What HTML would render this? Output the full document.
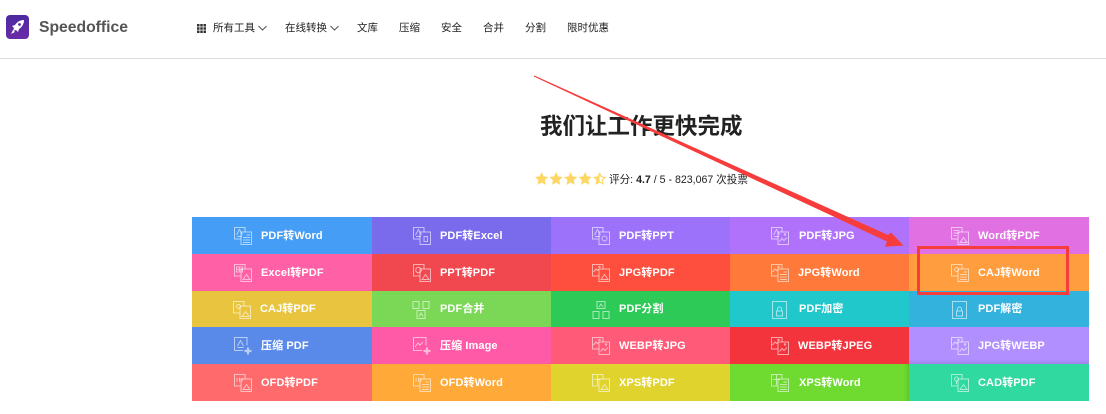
<!DOCTYPE html>
<html lang="zh"><head><meta charset="utf-8"><title>Speedoffice</title>
<style>
html,body{margin:0;padding:0;background:#fff}
body{width:1106px;height:414px;position:relative;overflow:hidden;font-family:"Liberation Sans","Noto Sans CJK SC",sans-serif}
.a{position:absolute;white-space:nowrap}
.n{top:21px;font-size:10.5px;line-height:15px;color:#222}
.c{position:absolute}
.c span{position:absolute;top:1px;line-height:36px;font-size:11px;font-weight:700;color:#fff;white-space:nowrap;letter-spacing:.1px}
.c.r3 span{top:0}
.c svg{position:absolute;top:10px;width:18px;height:18px;fill:none;stroke:#fff;stroke-opacity:.58;stroke-width:1}
</style></head><body>
<svg class="a" style="left:0;top:0" width="0" height="0">
<defs>
<linearGradient id="g" x1="0" y1="0" x2="0" y2="1"><stop offset="0" stop-color="#4b2aa0"/><stop offset="1" stop-color="#6a2aa8"/></linearGradient>
<symbol id="dd" viewBox="0 0 18 18"><path d="M6.500 12H.5V.5H11V5"/><path d="M7 5h10.500V17.500H7z"/></symbol>
<symbol id="A" viewBox="0 0 18 18"><path d="M2.500 8l3-5.500L8.500 8M3 9.500h5"/></symbol>
<symbol id="L" viewBox="0 0 18 18"><path d="M12.500 8h3.500M9 10.500h7M9 13h7M9 15.500h7"/></symbol>
<symbol id="B" viewBox="0 0 18 18"><path d="M9 15.500l3.500-5 3.500 5zM9 15.500h7"/></symbol>
<symbol id="P" viewBox="0 0 18 18"><path d="M1.500 8l2.500-3 1.500 1.500L7 5"/><circle cx="7.500" cy="3" r=".7"/></symbol>
<symbol id="Q" viewBox="0 0 18 18"><path d="M8.500 14.500l2.500-3 2 2 3-3"/><circle cx="14" cy="7.500" r=".7"/></symbol>
</defs></svg>

<!-- header -->
<svg class="a" style="left:6px;top:15px" width="23" height="24" viewBox="0 0 23 24"><rect width="23" height="24" rx="4" fill="url(#g)"/><path d="M18 5c-4 0-7 2-9 5l-3 1 2 2-1 3 3-1 2 2 1-3c3-2 5-5 5-9z" fill="#fff"/><circle cx="13.500" cy="9.500" r="1.400" fill="#5a2aa5"/><path d="M7 15l-2 4 4-2z" fill="#fff"/></svg>
<div class="a" style="left:39px;top:19px;font-size:15.7px;line-height:18px;font-weight:700;color:#555">Speedoffice</div>
<svg class="a" style="left:197px;top:24px" width="9" height="9" viewBox="0 0 9 9" fill="#333"><path d="M0 0h2.500v2.500H0zM3.250 0h2.500v2.500h-2.500zM6.500 0H9v2.500H6.500zM0 3.250h2.500v2.500H0zM3.250 3.250h2.500v2.500h-2.500zM6.500 3.250H9v2.500H6.500zM0 6.500h2.500V9H0zM3.250 6.500h2.500V9h-2.500zM6.500 6.500H9V9H6.500z"/></svg>
<div class="a n" style="left:213px">所有工具</div>
<svg class="a" style="left:258px;top:25px" width="9" height="6" fill="none" stroke="#555"><path d="M.5 1l4 4 4-4"/></svg>
<div class="a n" style="left:285px">在线转换</div>
<svg class="a" style="left:330px;top:25px" width="9" height="6" fill="none" stroke="#555"><path d="M.5 1l4 4 4-4"/></svg>
<div class="a n" style="left:357px">文库</div>
<div class="a n" style="left:399px">压缩</div>
<div class="a n" style="left:441px">安全</div>
<div class="a n" style="left:483px">合并</div>
<div class="a n" style="left:525px">分割</div>
<div class="a n" style="left:567px">限时优惠</div>
<div class="a" style="left:0;top:58px;width:1106px;height:1px;background:#ddd"></div>

<!-- heading -->
<div class="a" style="left:540px;top:112px;font-size:22.5px;line-height:30px;font-weight:700;color:#222">我们让工作更快完成</div>

<!-- rating -->
<svg class="a" style="left:535px;top:172px" width="72" height="14" viewBox="0 0 72 14" fill="#fdd663">
<path transform="scale(1.1)" d="M6 0l1.800 4 4.200.5-3.100 2.900.8 4.300L6 9.600 2.300 11.700l.8-4.300L0 4.500 4.200 4z"/>
<path transform="translate(14.500) scale(1.1)" d="M6 0l1.800 4 4.200.5-3.100 2.900.8 4.300L6 9.600 2.300 11.700l.8-4.300L0 4.500 4.200 4z"/>
<path transform="translate(29) scale(1.1)" d="M6 0l1.800 4 4.200.5-3.100 2.900.8 4.300L6 9.600 2.300 11.700l.8-4.300L0 4.500 4.200 4z"/>
<path transform="translate(43.500) scale(1.1)" d="M6 0l1.800 4 4.200.5-3.100 2.900.8 4.300L6 9.600 2.300 11.700l.8-4.300L0 4.500 4.200 4z"/>
<path transform="translate(58) scale(1.1)" d="M6 0v9.600L2.300 11.700l.8-4.300L0 4.500 4.200 4z"/>
<path transform="translate(58) scale(1.1)" fill="none" stroke="#fdd663" d="M6 1l1.500 3.400 3.500.5-2.600 2.400.7 3.500L6 9"/>
</svg>
<div class="a" style="left:609px;top:173px;font-size:10.6px;line-height:14px;color:#222">评分: <b>4.7</b> / 5 - 823,067 次投票</div>

<!-- grid row 1 -->
<div class="c" style="left:192px;top:217px;width:180px;height:37px;background:#459df5"><svg style="left:42px" viewBox="0 0 18 18"><use href="#dd"/><use href="#A"/><use href="#L"/></svg><span style="left:69px">PDF转Word</span></div>
<div class="c" style="left:372px;top:217px;width:179px;height:37px;background:#7a6bec"><svg style="left:41px" viewBox="0 0 18 18"><use href="#dd"/><use href="#A"/><path d="M11 9.500h3.500v5H11z"/></svg><span style="left:68px">PDF转Excel</span></div>
<div class="c" style="left:551px;top:217px;width:179px;height:37px;background:#9b72f9"><svg style="left:41px" viewBox="0 0 18 18"><use href="#dd"/><use href="#A"/><circle cx="12.500" cy="11.500" r="2.500"/></svg><span style="left:68px">PDF转PPT</span></div>
<div class="c" style="left:730px;top:217px;width:179px;height:37px;background:#b072fa"><svg style="left:41px" viewBox="0 0 18 18"><use href="#dd"/><use href="#A"/><use href="#Q"/></svg><span style="left:69px">PDF转JPG</span></div>
<div class="c" style="left:909px;top:217px;width:180px;height:37px;background:#e170e3"><svg style="left:42px" viewBox="0 0 18 18"><use href="#dd"/><path d="M2.500 3.500h6M2.500 6h6M2.500 8.500h3"/><use href="#B"/></svg><span style="left:69px">Word转PDF</span></div>
<!-- row 2 -->
<div class="c" style="left:192px;top:254px;width:180px;height:37px;background:#ff60a6"><svg style="left:42px" viewBox="0 0 18 18"><use href="#dd"/><path d="M2.500 3h6v5h-6zM5.500 3v5M2.500 5.500h6"/><use href="#B"/></svg><span style="left:69px">Excel转PDF</span></div>
<div class="c" style="left:372px;top:254px;width:179px;height:37px;background:#f1474f"><svg style="left:41px" viewBox="0 0 18 18"><use href="#dd"/><circle cx="5.500" cy="6" r="2.800"/><use href="#B"/></svg><span style="left:68px">PPT转PDF</span></div>
<div class="c" style="left:551px;top:254px;width:179px;height:37px;background:#fd4e3e"><svg style="left:41px" viewBox="0 0 18 18"><use href="#dd"/><use href="#P"/><use href="#B"/></svg><span style="left:68px">JPG转PDF</span></div>
<div class="c" style="left:730px;top:254px;width:179px;height:37px;background:#ff7a3a"><svg style="left:41px" viewBox="0 0 18 18"><use href="#dd"/><use href="#P"/><use href="#L"/></svg><span style="left:68px">JPG转Word</span></div>
<div class="c" style="left:909px;top:254px;width:180px;height:37px;background:#ff9d3f"><svg style="left:42px" viewBox="0 0 18 18"><use href="#dd"/><circle cx="5.500" cy="5.500" r="2"/><use href="#L"/></svg><span style="left:69px">CAJ转Word</span></div>
<!-- row 3 -->
<div class="c r3" style="left:192px;top:291px;width:180px;height:36px;background:#e9c53f"><svg style="left:41px" viewBox="0 0 18 18"><use href="#dd"/><circle cx="5.500" cy="5.500" r="2"/><use href="#B"/></svg><span style="left:68px">CAJ转PDF</span></div>
<div class="c r3" style="left:372px;top:291px;width:179px;height:36px;background:#7bd856"><svg style="left:40px" viewBox="0 0 18 18"><path d="M1 .5h6v7H1zM11 .5h6v7h-6zM5 9.500h8v8H5zM7 15.500l2-3.500 2 3.500"/></svg><span style="left:68px">PDF合并</span></div>
<div class="c r3" style="left:551px;top:291px;width:179px;height:36px;background:#2dca57"><svg style="left:41px" viewBox="0 0 18 18"><path d="M5 .5h8v7H5zM1 10.500h6v7H1zM11 10.500h6v7h-6zM7 6l2-3 2 3"/></svg><span style="left:68px">PDF分割</span></div>
<div class="c r3" style="left:730px;top:291px;width:179px;height:36px;background:#20c7cb"><svg style="left:41px" viewBox="0 0 18 18"><path d="M1.500.5h14v17h-14zM5.500 10h6v5h-6zM6.500 10V8a2 2 0 014 0v2"/></svg><span style="left:69px">PDF加密</span></div>
<div class="c r3" style="left:909px;top:291px;width:180px;height:36px;background:#33b2de"><svg style="left:42px" viewBox="0 0 18 18"><path d="M1.500.5h14v17h-14zM5.500 10h6v5h-6zM6.500 10V8a2 2 0 014 0v2"/></svg><span style="left:69px">PDF解密</span></div>
<!-- row 4 -->
<div class="c" style="left:192px;top:327px;width:180px;height:37px;background:#5a8ae9"><svg style="left:42px" viewBox="0 0 18 18"><path d="M9 13.500H.5V.5h12.500v8"/><path d="M3.500 9l3-5.500L9.500 9M3.500 10.500h6"/><path d="M14 10.500v7M10.500 14h7" stroke-width="2.200"/></svg><span style="left:69px">压缩 PDF</span></div>
<div class="c" style="left:372px;top:327px;width:179px;height:37px;background:#ff5aa8"><svg style="left:41px" viewBox="0 0 18 18"><path d="M9 13.500H.5V.5h12.500v8"/><path d="M2 10l3-4 2 2 3-3"/><path d="M14 10.500v7M10.500 14h7" stroke-width="2.200"/></svg><span style="left:68px">压缩 Image</span></div>
<div class="c" style="left:551px;top:327px;width:179px;height:37px;background:#ff5a77"><svg style="left:41px" viewBox="0 0 18 18"><use href="#dd"/><use href="#P"/><use href="#Q"/></svg><span style="left:68px">WEBP转JPG</span></div>
<div class="c" style="left:730px;top:327px;width:179px;height:37px;background:#f4343c"><svg style="left:41px" viewBox="0 0 18 18"><use href="#dd"/><use href="#P"/><use href="#Q"/></svg><span style="left:68px">WEBP转JPEG</span></div>
<div class="c" style="left:909px;top:327px;width:180px;height:37px;background:#b18fff;box-shadow:inset 0 -4px 4px -3px rgba(0,0,0,.14)"><svg style="left:42px" viewBox="0 0 18 18"><use href="#dd"/><use href="#P"/><use href="#Q"/></svg><span style="left:69px">JPG转WEBP</span></div>
<!-- row 5 -->
<div class="c" style="left:192px;top:364px;width:180px;height:37px;background:#ff6b6d"><svg style="left:42px" viewBox="0 0 18 18"><use href="#dd"/><path d="M3 4v3.500M5.500 3.500v4.500M8 4v3.500"/><use href="#B"/></svg><span style="left:69px">OFD转PDF</span></div>
<div class="c" style="left:372px;top:364px;width:179px;height:37px;background:#ffa938"><svg style="left:41px" viewBox="0 0 18 18"><use href="#dd"/><path d="M3 4v3.500M5.500 3.500v4.500M8 4v3.500"/><use href="#L"/></svg><span style="left:68px">OFD转Word</span></div>
<div class="c" style="left:551px;top:364px;width:179px;height:37px;background:#e0d32e"><svg style="left:41px" viewBox="0 0 18 18"><use href="#dd"/><path d="M5.500 1v10M2 5.500h7"/><use href="#B"/></svg><span style="left:68px">XPS转PDF</span></div>
<div class="c" style="left:730px;top:364px;width:179px;height:37px;background:#6fda30;box-shadow:inset -4px 0 4px -3px rgba(0,0,0,.16)"><svg style="left:41px" viewBox="0 0 18 18"><use href="#dd"/><path d="M5.500 1v10M2 5.500h7"/><use href="#L"/></svg><span style="left:69px">XPS转Word</span></div>
<div class="c" style="left:909px;top:364px;width:180px;height:37px;background:#2fd99f"><svg style="left:42px" viewBox="0 0 18 18"><use href="#dd"/><circle cx="5.500" cy="5" r="2"/><path d="M5.500 7v3"/><use href="#B"/></svg><span style="left:69px">CAD转PDF</span></div>

<!-- annotations -->
<svg class="a" style="left:0;top:0" width="1106" height="414">
<path d="M534.300 75.500L888 235 891 232.500 903.500 245.500 885 246.700 887 241.500 533.800 76.500z" fill="#f73c3c"/>
<rect x="918.500" y="247.500" width="149" height="46" fill="none" stroke="#f73c3c" stroke-width="3"/>
</svg>
</body></html>
